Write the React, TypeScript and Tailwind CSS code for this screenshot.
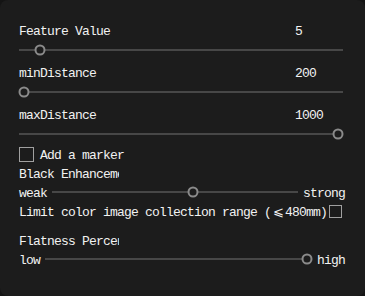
import type { ReactNode } from "react";

const font = { fontFamily: '"Liberation Mono", "DejaVu Sans Mono", monospace' };

const Track = ({ value, className = "" }: { value: number; className?: string }) => (
  <div className={`relative h-[2px] bg-[#474747] ${className}`}>
    <div
      className="absolute top-1/2 w-[11px] h-[11px] -translate-x-1/2 -translate-y-1/2 rounded-full border-2 border-[#8a8a8a] bg-[#1c1c1c]"
      style={{ left: `calc(5px + ${value} * (100% - 10px))` }}
    />
  </div>
);

const ValueSlider = ({ label, value, pos }: { label: string; value: string; pos: number }) => (
  <>
    <div className="flex h-[20px] items-center pt-[3px]">
      <span className="w-[276px]">{label}</span>
      <span>{value}</span>
    </div>
    <div className="flex h-[22px] items-center pb-[2px]">
      <Track value={pos} className="flex-1" />
    </div>
  </>
);

const RangeRow = ({ left, right, pos }: { left: string; right: string; pos: number }) => (
  <div className="flex h-[18px] items-center gap-[5px]">
    <span className="pt-[2px]">{left}</span>
    <Track value={pos} className="flex-1" />
    <span className="pt-[2px]">{right}</span>
  </div>
);

const Clipped = ({ children }: { children: ReactNode }) => (
  <div className="flex h-[20px] items-center pt-[3px]">
    <span className="w-[100px] overflow-hidden whitespace-nowrap">{children}</span>
  </div>
);

export default function App() {
  return (
    <div className="w-[365px] h-[296px] bg-[#141414]">
      <div
        className="w-full h-full rounded-[8px] bg-[#1c1c1c] pt-[20px] pl-[19px] pr-[20px] text-[13px] leading-none tracking-[-0.8px] text-[#f2f2f2]"
        style={font}
      >
        <div className="pr-[2px]">
          <ValueSlider label="Feature Value" value="5" pos={0.05} />
          <ValueSlider label="minDistance" value="200" pos={0} />
          <ValueSlider label="maxDistance" value="1000" pos={1} />
        </div>

        <div className="flex h-[17px] items-center gap-[6px]">
          <div className="w-[15px] h-[15px] border border-[#a0a0a0]" />
          <span className="pt-[2px]">Add a marker</span>
        </div>

        <Clipped>Black Enhancement</Clipped>
        <RangeRow left="weak" right="strong" pos={0.576} />

        <div className="flex h-[20px] items-center">
          <span className="whitespace-nowrap pt-[2px]">
            Limit color image collection range (
            <span className="inline-block w-[14px] text-center tracking-normal">⩽</span>
            480mm)
          </span>
          <div className="ml-[2px] w-[13px] h-[13px] border border-[#a0a0a0]" />
        </div>

        <div className="mt-[9px]">
          <Clipped>Flatness Percentage</Clipped>
        </div>
        <RangeRow left="low" right="high" pos={1} />
      </div>
    </div>
  );
}
